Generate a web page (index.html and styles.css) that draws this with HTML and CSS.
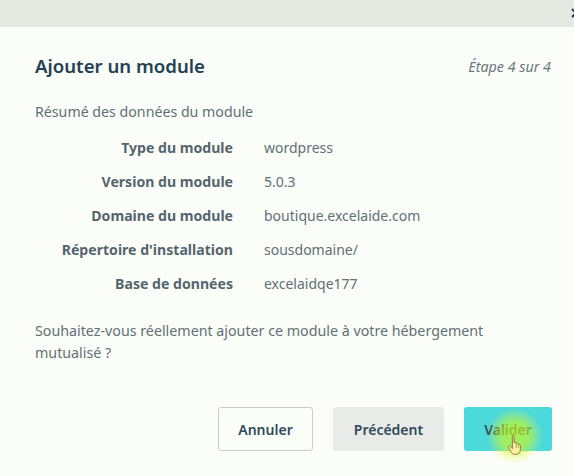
FILE: index.html
```html
<!DOCTYPE html>
<html lang="fr">
  <head>
    <meta charset="UTF-8" />
    <meta name="viewport" content="width=device-width, initial-scale=1.0" />
    <title>Ajouter un module</title>
    <link rel="stylesheet" href="styles.css">
  </head>
  <body>
    <div class="top-bar">
      <svg class="close-icon" width="10" height="10" viewBox="0 0 10 10">
        <path d="M1 1 L9 9 M9 1 L1 9" stroke="#2b3f4c" stroke-width="2" fill="none" />
      </svg>
    </div>

    <div class="modal">
      <div class="modal-header">
        <h2>Ajouter un module</h2>
        <span class="step">Étape 4 sur 4</span>
      </div>

      <p class="intro">Résumé des données du module</p>

      <dl class="summary">
        <dt>Type du module</dt>
        <dd>wordpress</dd>
        <dt>Version du module</dt>
        <dd>5.0.3</dd>
        <dt>Domaine du module</dt>
        <dd>boutique.excelaide.com</dd>
        <dt>Répertoire d'installation</dt>
        <dd>sousdomaine/</dd>
        <dt>Base de données</dt>
        <dd>excelaidqe177</dd>
      </dl>

      <p class="question">Souhaitez-vous réellement ajouter ce module à votre hébergement mutualisé ?</p>

      <div class="actions">
        <button type="button" class="btn btn-cancel">Annuler</button>
        <button type="button" class="btn btn-back">Précédent</button>
        <button type="button" class="btn btn-ok">Valider</button>
      </div>
    </div>

    <div class="cursor-halo"></div>
    <svg class="cursor-hand" width="16" height="22" viewBox="0 0 18 24">
      <path d="M6 2.2 C6 1 8 1 8 2.2 V9.5 C8.2 8.5 10.2 8.5 10.4 9.8 V10.6 C10.7 9.6 12.6 9.7 12.8 11 V11.8 C13.2 11 15 11.2 15 12.6 V17 C15 20 13.5 22.5 10.5 22.5 H8.5 C6.5 22.5 5.5 21.3 4.5 19.5 L1.6 14.8 C0.9 13.5 2.5 12.4 3.6 13.5 L6 16 Z" fill="#fbeea0" stroke="#8a7838" stroke-width="1.1" stroke-linejoin="round" />
      <path d="M10.2 11 V15 M12.6 12.2 V15" stroke="#8a7838" stroke-width="0.8" fill="none" />
    </svg>
  </body>
</html>
```

FILE: styles.css
```css
body {
  margin: 0;
  height: 476px;
  overflow: hidden;
  font-family: "Noto Sans", sans-serif;
  font-size: 14px;
  color: #627074;
  background-color: #fbfdf9;
}

.top-bar {
  height: 27px;
  background-color: #e4e9e1;
  display: flex;
  justify-content: flex-end;
  align-items: center;
  overflow: hidden;
}

.close-icon {
  margin-right: -7px;
  margin-top: -1px;
}

.modal {
  padding: 26px 22px 0 35px;
}

.modal-header {
  display: flex;
  justify-content: space-between;
  align-items: center;
}

h2 {
  margin: 0;
  font-size: 18.6px;
  line-height: 26px;
  font-weight: 600;
  color: #234152;
}

.step {
  margin-right: 1px;
  font-size: 14.3px;
  font-style: italic;
  color: #6a777c;
}

.intro {
  margin: 23px 0 0;
  font-size: 14.2px;
  line-height: 20px;
}

.summary {
  display: grid;
  grid-template-columns: 198px 1fr;
  column-gap: 31px;
  row-gap: 14px;
  margin: 16px 0 0;
  line-height: 20px;
}

.summary dt {
  text-align: right;
  font-size: 14.1px;
  font-weight: 700;
  color: #55656d;
}

.summary dd {
  margin: 0;
}

.question {
  margin: 26px 0 0;
  font-size: 14.25px;
  line-height: 22px;
  max-width: 480px;
}

.actions {
  display: flex;
  justify-content: flex-end;
  gap: 20px;
  margin-top: 43px;
}

.btn {
  height: 44px;
  border: 1px solid transparent;
  border-radius: 3px;
  font-family: inherit;
  font-size: 14px;
  font-weight: 600;
  color: #2f4a5a;
  cursor: pointer;
}

.btn-cancel {
  width: 95px;
  background-color: #fbfdf9;
  border-color: #c9cdca;
}

.btn-back {
  width: 111px;
  background-color: #e9ebe8;
}

.btn-ok {
  width: 88px;
  background-color: #4bd9d9;
}

.cursor-halo {
  position: absolute;
  left: 487px;
  top: 408px;
  width: 56px;
  height: 56px;
  border-radius: 50%;
  background: radial-gradient(circle closest-side, rgba(205, 250, 30, 0.7) 0%, rgba(205, 250, 30, 0.62) 50%, rgba(235, 250, 60, 0.25) 80%, rgba(250, 255, 90, 0) 100%);
}

.cursor-hand {
  position: absolute;
  left: 507px;
  top: 434px;
}
```
